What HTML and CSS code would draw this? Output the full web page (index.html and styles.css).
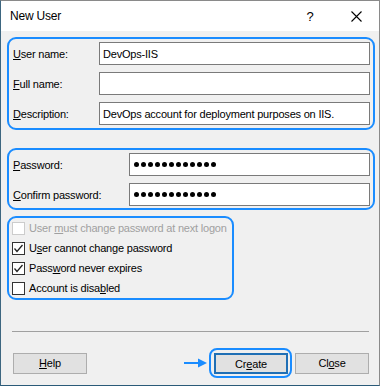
FILE: index.html
```html
<!DOCTYPE html>
<html lang="en">
<head>
  <meta charset="UTF-8" />
  <title>New User</title>
  <link rel="stylesheet" href="styles.css">
</head>
<body>
  <div class="window">
    <div class="titlebar">
      <span class="title">New User</span>
      <span class="help-btn">?</span>
      <span class="close-btn">
        <svg width="11" height="11" viewBox="0 0 11 11"><path d="M0.5 0.5 L10.5 10.5 M10.5 0.5 L0.5 10.5" stroke="#000" stroke-width="1.1" fill="none"/></svg>
      </span>
    </div>

    <div class="content">
      <div class="group names">
        <label class="lbl"><u>U</u>ser name:</label>
        <div class="field">DevOps-IIS</div>
        <label class="lbl"><u>F</u>ull name:</label>
        <div class="field"></div>
        <label class="lbl"><u>D</u>escription:</label>
        <div class="field">DevOps account for deployment purposes on IIS.</div>
      </div>

      <div class="group passwords">
        <label class="lbl"><u>P</u>assword:</label>
        <div class="field"><span class="dots"><i></i><i></i><i></i><i></i><i></i><i></i><i></i><i></i><i></i><i></i><i></i><i></i></span></div>
        <label class="lbl"><u>C</u>onfirm password:</label>
        <div class="field"><span class="dots"><i></i><i></i><i></i><i></i><i></i><i></i><i></i><i></i><i></i><i></i><i></i><i></i></span></div>
      </div>

      <div class="group options">
        <div class="check disabled"><span class="box"></span><span>User <u>m</u>ust change password at next logon</span></div>
        <div class="check"><span class="box"><svg width="11" height="11" viewBox="0 0 11 11"><path d="M1.5 5.5 L4 8.5 L9.5 2" stroke="#222" stroke-width="1.3" fill="none"/></svg></span><span>U<u>s</u>er cannot change password</span></div>
        <div class="check"><span class="box"><svg width="11" height="11" viewBox="0 0 11 11"><path d="M1.5 5.5 L4 8.5 L9.5 2" stroke="#222" stroke-width="1.3" fill="none"/></svg></span><span>Pass<u>w</u>ord never expires</span></div>
        <div class="check"><span class="box"></span><span>Account is disa<u>b</u>led</span></div>
      </div>

      <div class="separator"></div>

      <div class="buttons">
        <button class="btn"><u>H</u>elp</button>
        <div class="spacer"></div>
        <svg class="arrow" width="24" height="10" viewBox="0 0 24 10"><path d="M0 5 H16" stroke="#1a8cff" stroke-width="2"/><path d="M14 0.5 L23 5 L14 9.5 Z" fill="#1a8cff"/></svg>
        <div class="ring"><button class="btn default">Cr<u>e</u>ate</button></div>
        <button class="btn">Cl<u>o</u>se</button>
      </div>
    </div>
  </div>
</body>
</html>
```

FILE: styles.css
```css
* {
  box-sizing: border-box;
  margin: 0;
  padding: 0;
}
body {
  width: 380px;
  height: 386px;
  font-family: 'Liberation Sans', Arial, sans-serif;
  font-size: 11px;
  letter-spacing: -0.2px;
  color: #000;
  background: #fff;
}
/* Finestra */
.window {
  width: 380px;
  height: 386px;
  border: 1px solid #8a8a8a;
  border-bottom-color: #2a5a78;
  border-left-color: #3d6680;
  background: #f0f0f0;
  display: flex;
  flex-direction: column;
}
.titlebar {
  height: 30px;
  background: #fff;
  display: flex;
  align-items: center;
  padding-left: 9px;
}
.title {
  font-size: 12px;
  flex: 1;
}
.help-btn {
  font-size: 13px;
  width: 46px;
  text-align: center;
}
.close-btn {
  width: 46px;
  height: 30px;
  display: flex;
  align-items: center;
  justify-content: center;
}
.content {
  padding: 6px 4px 0 6px;
}
/* Gruppi evidenziati */
.group {
  border: 2px solid #1a8cff;
  border-radius: 9px;
}
.names,
.passwords {
  display: grid;
  align-items: center;
  padding: 3px 3px 3px 4px;
}
.names {
  grid-template-columns: 86px 271px;
  row-gap: 7px;
}
.passwords {
  margin-top: 18px;
  grid-template-columns: 116px 241px;
  row-gap: 7px;
  padding-bottom: 2px;
}
.lbl {
  white-space: nowrap;
}
.field {
  height: 23px;
  background: #fff;
  border: 1px solid #7a7a7a;
  padding: 0 3px;
  display: flex;
  align-items: center;
  white-space: nowrap;
  overflow: hidden;
}
.dots {
  display: flex;
  gap: 2px;
  padding-left: 1px;
}
.dots i {
  width: 5px;
  height: 5px;
  border-radius: 50%;
  background: #000;
}
.options {
  margin-top: 6px;
  width: 227px;
  padding: 0 0 0 3px;
}
.check {
  height: 20px;
  display: flex;
  align-items: center;
  white-space: nowrap;
}
.check .box {
  flex-shrink: 0;
  width: 13px;
  height: 13px;
  border: 1px solid #333;
  background: #fff;
  margin-right: 4px;
  display: flex;
  align-items: center;
  justify-content: center;
}
.check.disabled {
  color: #a0a0a0;
}
.check.disabled .box {
  border-color: #cccccc;
}
.separator {
  margin: 31px 6px 0 5px;
  border-top: 1px solid #a0a0a0;
}
/* Pulsanti */
.buttons {
  display: flex;
  align-items: center;
  margin-top: 16px;
  padding: 0 6px 0 6px;
}
.spacer {
  flex: 1;
}
.btn {
  width: 74px;
  height: 21px;
  background: #e1e1e1;
  border: 1px solid #adadad;
  font-family: inherit;
  font-size: 11px;
  letter-spacing: -0.2px;
  color: #000;
}
.btn.default {
  border: 2px solid #1f6fb5;
}
.arrow {
  margin-right: 1px;
}
.ring {
  border: 2px solid #1a8cff;
  border-radius: 8px;
  padding: 3px 2px 2px 3px;
  margin-right: 3px;
  display: flex;
}
```
